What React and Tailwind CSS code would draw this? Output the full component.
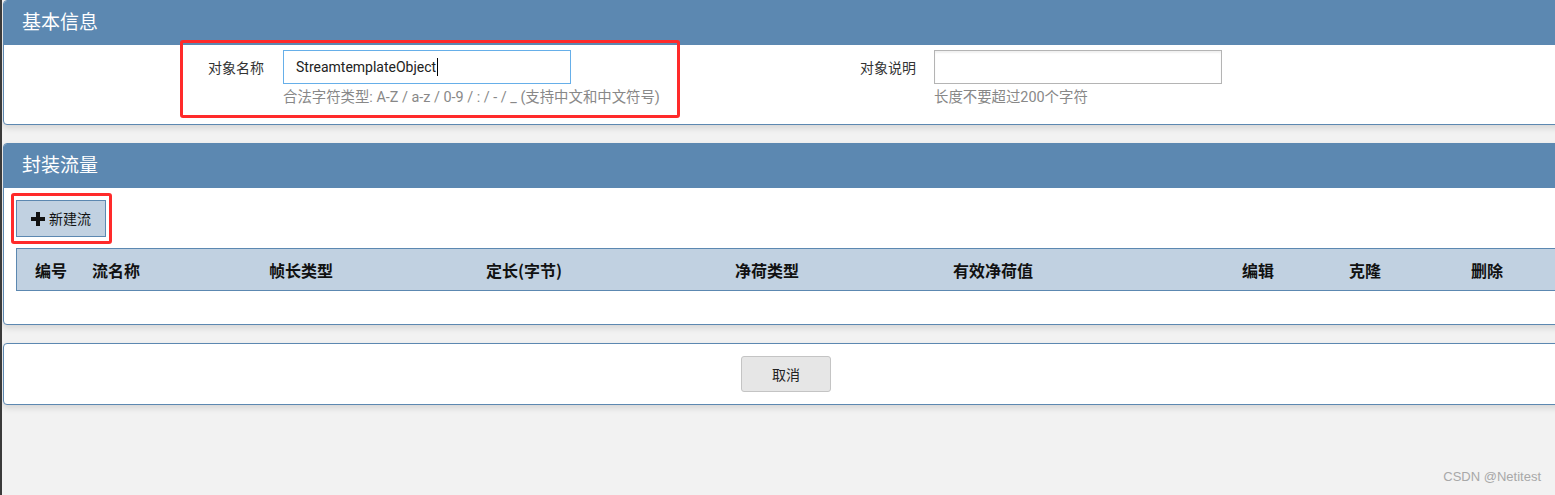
import React from "react";

const cjk = { fontFamily: '"Noto Sans CJK SC", "Noto Sans", sans-serif' };
const roboto = { fontFamily: 'Roboto, "Noto Sans CJK SC", sans-serif' };

function PanelHeader({ title }) {
  return (
    <div className="h-[44px] bg-[#5c88b1] flex items-center pl-[18px] pb-[4px] text-white text-[19px]" style={cjk}>
      {title}
    </div>
  );
}

function PlusIcon() {
  return (
    <svg width="14" height="14" viewBox="0 0 14 14" className="block">
      <path d="M5 0h4v5h5v4H9v5H5V9H0V5h5z" fill="#111" />
    </svg>
  );
}

const cols = [
  ["编号", 57],
  ["流名称", 177],
  ["帧长类型", 217],
  ["定长(字节)", 249],
  ["净荷类型", 218],
  ["有效净荷值", 289],
  ["编辑", 107],
  ["克隆", 122],
  ["删除", 120],
];

export default function App() {
  return (
    <div className="relative w-[1555px] h-[495px] overflow-hidden bg-[#f2f2f2] border-l-[2px] border-[#3a3a3a]">
      <div className="flex flex-col gap-[18px] pl-[1px] w-[1600px]">
        {/* Panel 1 */}
        <div className="bg-white border border-[#5c88b1] rounded-[4px] overflow-hidden shadow-[0_3px_6px_rgba(0,0,0,0.12)]">
          <PanelHeader title="基本信息" />
          <div className="flex pt-[5px] pb-[16px] pl-[180px]">
            <div className="w-[80px] h-[34px] flex items-center justify-end text-[14px] text-[#333]" style={cjk}>
              对象名称
            </div>
            <div className="ml-[19px] w-[288px]">
              <div className="h-[34px] border border-[#66afe9] flex items-center pl-[12px] text-[14px] text-[#222]" style={roboto}>
                StreamtemplateObject<span className="inline-block w-[1px] h-[18px] bg-black ml-[1px]" />
              </div>
              <div className="mt-[4px] leading-[20px] text-[14.4px] text-[#888] whitespace-nowrap" style={roboto}>
                合法字符类型: A-Z / a-z / 0-9 / : / - / _ (支持中文和中文符号)
              </div>
            </div>
            <div className="ml-[265px] w-[80px] h-[34px] flex items-center justify-end text-[14px] text-[#333]" style={cjk}>
              对象说明
            </div>
            <div className="ml-[18px] w-[288px]">
              <div className="h-[34px] border border-[#b4b4b4] bg-white shadow-[inset_0_2px_2px_rgba(0,0,0,0.06)]" />
              <div className="mt-[4px] leading-[20px] text-[14.4px] text-[#888] whitespace-nowrap" style={roboto}>
                长度不要超过200个字符
              </div>
            </div>
          </div>
        </div>

        {/* Panel 2 */}
        <div className="bg-white border border-[#5c88b1] rounded-[4px] overflow-hidden shadow-[0_3px_6px_rgba(0,0,0,0.12)]">
          <PanelHeader title="封装流量" />
          <div className="pt-[12px] pl-[12px] pb-[33px]">
            <button className="w-[90px] h-[37px] bg-[#c1d1e1] border border-[#5c88b1] flex items-center justify-center gap-[4px] text-[14px] text-[#111]" style={cjk}>
              <PlusIcon />
              <span>新建流</span>
            </button>
            <div className="mt-[11px] h-[43px] bg-[#c1d1e1] border border-[#5c88b1] flex items-center pl-[18px] font-bold text-[16px] text-[#111]" style={cjk}>
              {cols.map(([t, w]) => (
                <div key={t} className="shrink-0" style={{ width: w }}>
                  {t}
                </div>
              ))}
            </div>
          </div>
        </div>

        {/* Panel 3 */}
        <div className="bg-white border border-[#5c88b1] rounded-[4px] shadow-[0_3px_6px_rgba(0,0,0,0.12)] py-[12px] pl-[737px]">
          <button className="w-[90px] h-[36px] bg-[#e6e6e6] border border-[#c4c4c4] rounded-[3px] text-[14px] text-[#222] flex items-center justify-center" style={cjk}>
            取消
          </button>
        </div>
      </div>

      {/* red annotation boxes */}
      <div className="absolute left-[178px] top-[40px] w-[500px] h-[78px] border-[3px] border-[#ff2a2a] rounded-[3px]" />
      <div className="absolute left-[9px] top-[193px] w-[101px] h-[51px] border-[3px] border-[#ff2a2a] rounded-[3px]" />

      <div className="absolute right-[14px] bottom-[9px] text-[13px] text-[#a8a8a8]" style={{ fontFamily: '"Liberation Sans", Arial, sans-serif' }}>
        CSDN @Netitest
      </div>
    </div>
  );
}
